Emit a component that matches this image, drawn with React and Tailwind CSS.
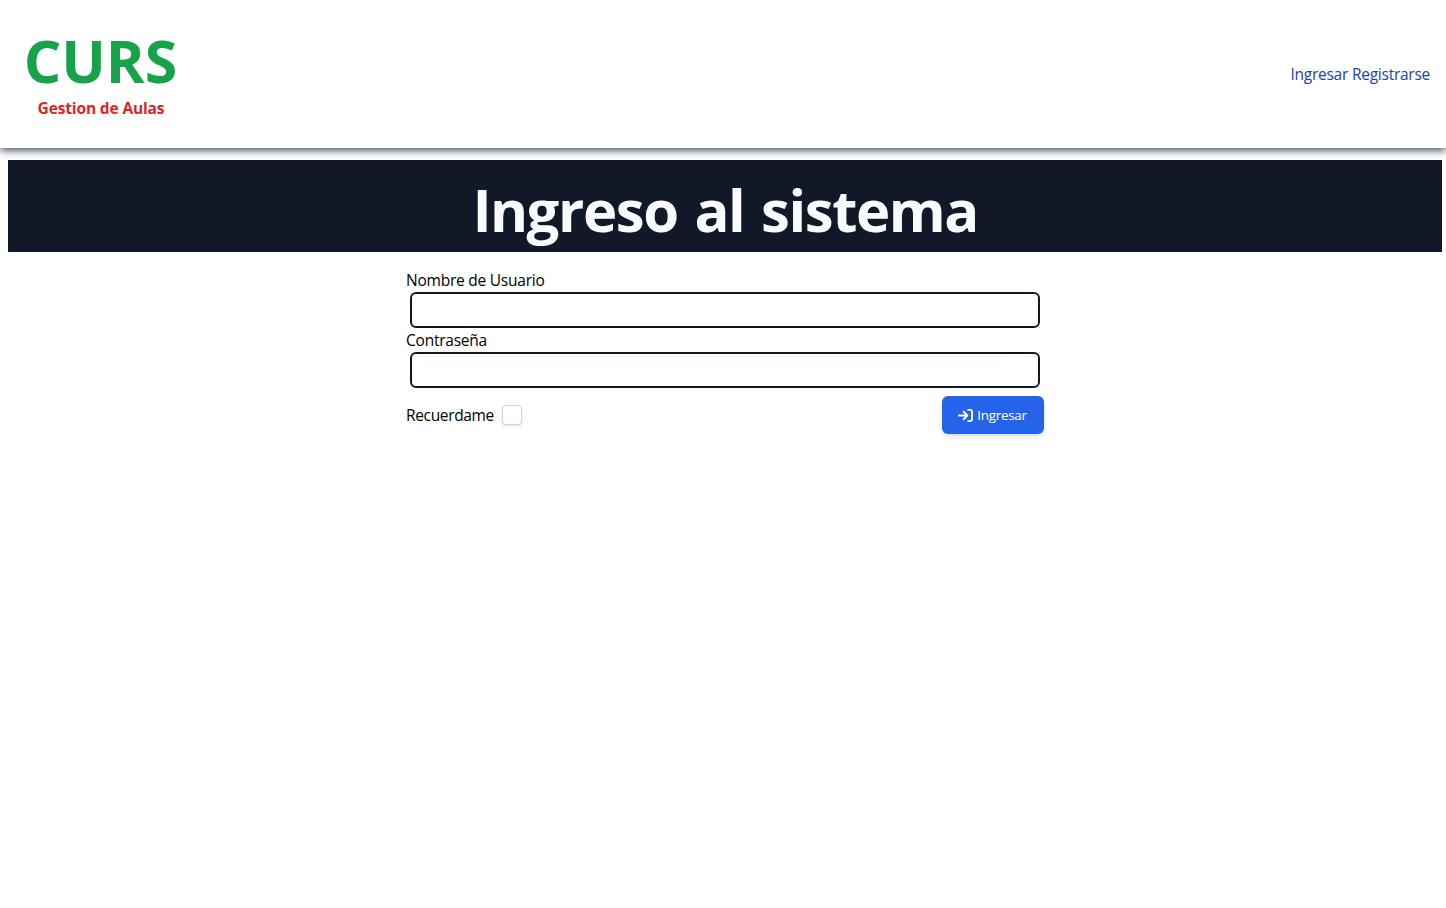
import { FaArrowRightToBracket } from "react-icons/fa6";

function Field({ label, type }) {
  return (
    <label className="flex h-[60px] flex-col">
      <span className="h-6 text-[15.5px] leading-[25px] tracking-[-0.23px]">{label}</span>
      <input
        type={type}
        className="mx-1 h-9 rounded-md border-2 border-[#111827] bg-white px-2 outline-none"
      />
    </label>
  );
}

export default function App() {
  return (
    <div className="min-h-screen bg-white font-['Open_Sans',sans-serif] text-base text-black">
      <header className="flex h-[148px] items-center justify-between px-4 shadow-[0_2px_8px_#334155]">
        <div className="flex w-[170px] flex-col items-center pt-0.5">
          <span className="pr-px text-[59px] leading-[60px] font-bold whitespace-nowrap text-[#16a34a]">CURS</span>
          <span className="mt-1.5 text-[15.5px] leading-6 font-bold tracking-[-0.14px] whitespace-nowrap text-[#dc2626]">Gestion de Aulas</span>
        </div>
        <nav className="flex gap-1 text-[15.5px] leading-6 tracking-[-0.26px] text-[#1e40af]">
          <a href="#">Ingresar</a>
          <a href="#">Registrarse</a>
        </nav>
      </header>
      <main className="pt-3 pr-1 pl-2">
        <h1 className="flex h-[92px] items-center justify-center bg-[#111827] pt-2 text-[58px] leading-[60px] font-bold tracking-[-1.4px] text-[#f9fafb] [word-spacing:3px]">
          <span className="pl-0.5"><span className="pr-px font-['Inter',sans-serif]">I</span>ngreso al sistema</span>
        </h1>
        <form className="mx-auto mt-4 w-[638px]">
          <Field label="Nombre de Usuario" type="text" />
          <Field label="Contraseña" type="password" />
          <div className="mt-2 flex items-center justify-between">
            <label className="flex items-center gap-2">
              <span className="w-[88px] text-[15.5px] leading-6 tracking-[-0.35px]">Recuerdame</span>
              <input type="checkbox" className="size-5 appearance-none rounded border border-[#cbd5e1] bg-white shadow-sm" />
            </label>
            <button type="button" className="flex h-[38px] w-[102px] items-center justify-center gap-1 rounded-md bg-[#2563eb] pr-px text-[13.5px] font-medium tracking-[-0.3px] text-white shadow-md">
              <FaArrowRightToBracket className="size-[15px]" />
              <span>Ingresar</span>
            </button>
          </div>
        </form>
      </main>
    </div>
  );
}
